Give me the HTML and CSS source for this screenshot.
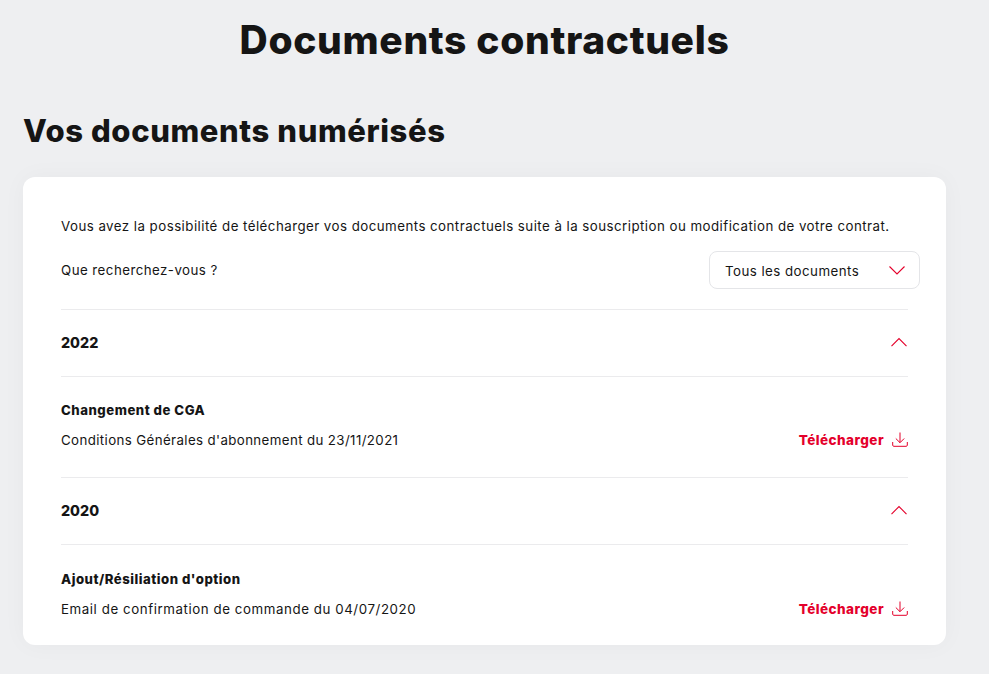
FILE: index.html
```html
<!DOCTYPE html>
<html lang="fr">
<head>
<meta charset="utf-8">
<title>Documents contractuels</title>
<link rel="stylesheet" href="styles.css">
</head>
<body>
<main class="page">
  <h1 class="title">Documents contractuels</h1>
  <h2 class="subtitle">Vos documents numérisés</h2>
  <section class="card">
    <p class="intro">Vous avez la possibilité de télécharger vos documents contractuels suite à la souscription ou modification de votre contrat.</p>
    <div class="filter">
      <span class="filter-label">Que recherchez-vous ?</span>
      <div class="select">
        <span class="select-value">Tous les documents</span>
        <svg class="chev-down" width="16" height="9" viewBox="0 0 16 9"><path d="M.5.5 8 8 15.5.5" fill="none" stroke="#e4002b" stroke-width="1.1"/></svg>
      </div>
    </div>
    <div class="list">
      <div class="year"><span>2022</span><svg class="chev-up" width="18" height="10" viewBox="0 0 18 10"><path d="M1.5 9.2 9 1.5l7.5 7.7" fill="none" stroke="#e4002b" stroke-width="1.1"/></svg></div>
      <div class="doc">
        <div class="doc-type">Changement de CGA</div>
        <div class="doc-row">
          <span class="label-tight">Conditions Générales d'abonnement du 23/11/2021</span>
          <a class="dl">Télécharger<svg width="16" height="15" viewBox="0 0 16 15"><path d="M8 .5v10M3.8 6.5 8 10.7l4.2-4.2M.7 10v3.2c0 .7.5 1.1 1.1 1.1h12.4c.6 0 1.1-.4 1.1-1.1V10" fill="none" stroke="#e4002b" stroke-width="1"/></svg></a>
        </div>
      </div>
      <div class="year"><span>2020</span><svg class="chev-up" width="18" height="10" viewBox="0 0 18 10"><path d="M1.5 9.2 9 1.5l7.5 7.7" fill="none" stroke="#e4002b" stroke-width="1.1"/></svg></div>
      <div class="doc last">
        <div class="doc-type">Ajout/Résiliation d'option</div>
        <div class="doc-row">
          <span class="label-wide">Email de confirmation de commande du 04/07/2020</span>
          <a class="dl">Télécharger<svg width="16" height="15" viewBox="0 0 16 15"><path d="M8 .5v10M3.8 6.5 8 10.7l4.2-4.2M.7 10v3.2c0 .7.5 1.1 1.1 1.1h12.4c.6 0 1.1-.4 1.1-1.1V10" fill="none" stroke="#e4002b" stroke-width="1"/></svg></a>
        </div>
      </div>
    </div>
  </section>
</main>
</body>
</html>
```
FILE: styles.css
```css
* { box-sizing: border-box; }
html { background: #fff; height: 100%; overflow: hidden; }
body {
  margin: 0;
  width: 989px;
  height: 674px;
  overflow: hidden;
  background: #eeeff1;
  font-family: "Inter", "Liberation Sans", sans-serif;
  color: #151515;
}
.page { padding: 0 43px 0 23px; }
.title {
  margin: 0;
  padding-top: 14px;
  height: 104px;
  text-align: center;
  font-size: 39px;
  line-height: 52px;
  font-weight: 800;
  letter-spacing: 0.65px;
  color: #151515;
}
.subtitle {
  margin: 0;
  height: 73px;
  padding-top: 7px;
  font-size: 31px;
  line-height: 40px;
  font-weight: 800;
  letter-spacing: 0.6px;
}
.card {
  background: #fff;
  border-radius: 12px;
  height: 468px;
  padding: 38px 26px 0 38px;
  box-shadow: 0 0 24px rgba(20, 30, 50, 0.035);
  font-size: 13.3px;
  line-height: 22px;
  letter-spacing: 0.46px;
}
.intro { margin: 0; height: 36px; white-space: nowrap; }
.filter {
  display: flex;
  justify-content: space-between;
  align-items: flex-start;
  height: 58px;
}
.filter-label { line-height: 38px; }
.select {
  display: flex;
  align-items: center;
  justify-content: space-between;
  width: 211px;
  height: 38px;
  padding: 0 14px 0 15px;
  border: 1px solid #e4e5e8;
  border-radius: 8px;
  background: #fff;
  white-space: nowrap;
}
.select-value { position: relative; top: 1px; }
.list { margin-right: 12px; }
.year {
  display: flex;
  justify-content: space-between;
  align-items: center;
  height: 68px;
  border-top: 1px solid #ebebed;
  border-bottom: 1px solid #ebebed;
  font-size: 14.3px;
  letter-spacing: 0;
  font-weight: 800;
}
.chev-up { margin-bottom: 2px; }
.doc { height: 100px; padding-top: 22px; }
.doc.last { height: auto; padding-top: 23px; }
.doc-type { font-weight: 800; height: 30px; font-size: 13.2px; letter-spacing: 0.5px; }
.doc-row { display: flex; justify-content: space-between; align-items: center; }
.label-tight { letter-spacing: 0.38px; }
.label-wide { letter-spacing: 0.57px; }
.dl {
  display: flex;
  align-items: center;
  gap: 8px;
  color: #e4002b;
  font-weight: 800;
  font-size: 13.5px;
  letter-spacing: 0.45px;
}
.dl svg { margin-top: -2px; }
```
